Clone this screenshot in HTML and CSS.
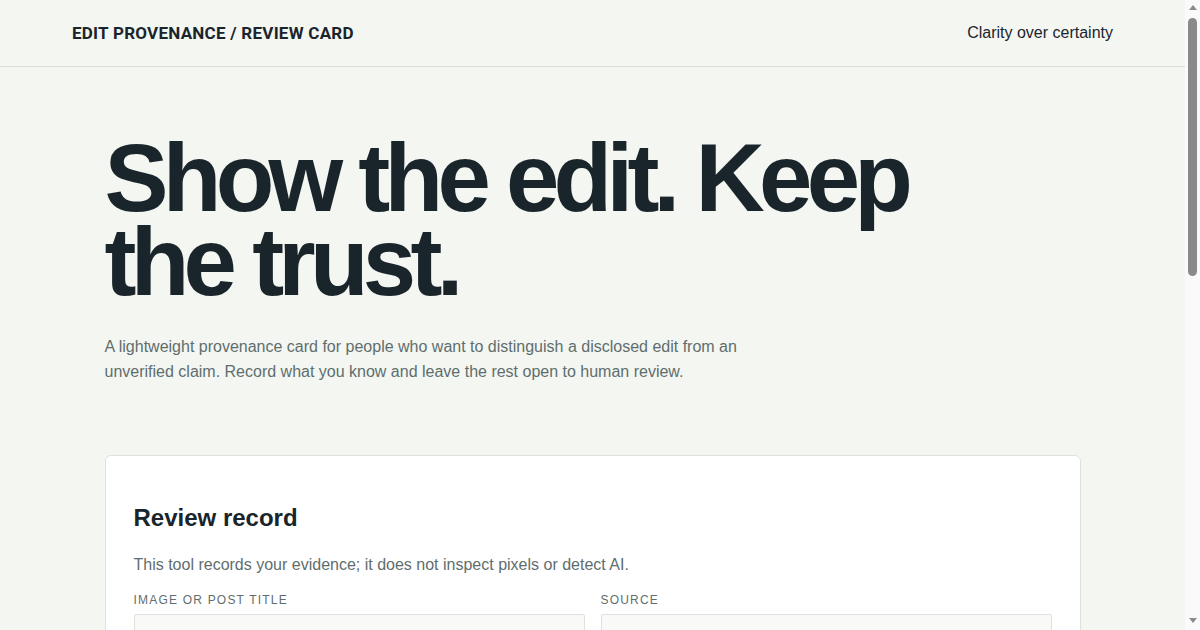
FILE: index.html
```html
<!DOCTYPE html>
<html lang="en">
<head>
<meta charset="utf-8">
<title>Edit Provenance / Review Card</title>
<link rel="stylesheet" href="styles.css">
</head>
<body>
<div class="page">
<header class="topbar">
  <div class="brand">EDIT PROVENANCE / REVIEW CARD</div>
  <div class="motto">Clarity over certainty</div>
</header>
<main class="wrap">
  <section class="hero">
    <h1 class="hero-title">Show the edit. Keep the trust.</h1>
    <p class="hero-lede">A lightweight provenance card for people who want to distinguish a disclosed edit from an unverified claim. Record what you know and leave the rest open to human review.</p>
  </section>
  <section class="card">
    <h2 class="card-title">Review record</h2>
    <p class="card-note">This tool records your evidence; it does not inspect pixels or detect AI.</p>
    <div class="fields">
      <label class="field">
        <span class="field-label">Image or post title</span>
        <input class="field-input" type="text">
      </label>
      <label class="field">
        <span class="field-label">Source</span>
        <input class="field-input" type="text">
      </label>
    </div>
  </section>
</main>
</div>
<div class="rail" aria-hidden="true">
  <span class="rail-up"></span>
  <span class="rail-thumb"></span>
  <span class="rail-down"></span>
</div>
</body>
</html>
```

FILE: styles.css
```css
html, body {
  margin: 0;
  padding: 0;
  height: 100%;
  overflow: hidden;
}
body {
  background: #f4f6f2;
  color: #1a252b;
  font-family: "Liberation Sans", Arial, sans-serif;
  display: flex;
}
.page {
  flex: 1;
  height: 100vh;
  overflow: hidden;
}
.rail {
  width: 15px;
  flex: none;
  height: 100vh;
  background: #fafafa;
  display: flex;
  flex-direction: column;
  align-items: center;
}
.rail-up {
  margin-top: 5px;
  width: 0;
  height: 0;
  border-left: 4.5px solid transparent;
  border-right: 4.5px solid transparent;
  border-bottom: 5px solid #8a8a8a;
}
.rail-thumb {
  margin-top: 8px;
  width: 9px;
  height: 258px;
  border-radius: 5px;
  background: #8a8a8a;
}
.rail-down {
  margin-top: auto;
  margin-bottom: 7px;
  width: 0;
  height: 0;
  border-left: 4.5px solid transparent;
  border-right: 4.5px solid transparent;
  border-top: 5px solid #8a8a8a;
}
.topbar {
  height: 67px;
  box-sizing: border-box;
  border-bottom: 1px solid #d8e2dc;
  display: flex;
  align-items: center;
  justify-content: space-between;
  padding: 0 72px;
}
.brand {
  font-family: Roboto, "Liberation Sans", sans-serif;
  font-weight: 700;
  font-size: 17px;
  line-height: 20px;
  letter-spacing: 0.015em;
  color: #1a252b;
  margin-top: -1px;
}
.motto {
  font-size: 16px;
  color: #1a252b;
}
.wrap {
  max-width: 976px;
  margin: 0 auto;
}
.hero {
  padding-top: 69px;
}
.hero-title {
  margin: 0;
  font-size: 96px;
  line-height: 0.88;
  font-weight: 700;
  letter-spacing: -0.06em;
  max-width: 860px;
  color: #1a252b;
}
.hero-lede {
  margin: 29px 0 0;
  max-width: 640px;
  font-size: 16px;
  line-height: 25px;
  color: #5f6e6d;
}
.card {
  margin-top: 71px;
  background: #ffffff;
  border: 1px solid #dce3de;
  border-radius: 6px;
  padding: 47px 28px 28px;
}
.card-title {
  margin: 0;
  font-size: 24px;
  line-height: 30px;
  font-weight: 700;
  color: #1a252b;
}
.card-note {
  margin: 20px 0 0;
  font-size: 16px;
  line-height: 24px;
  color: #5f6e6d;
}
.fields {
  margin-top: 16px;
  display: grid;
  grid-template-columns: 1fr 1fr;
  gap: 16px;
}
.field {
  display: flex;
  flex-direction: column;
  gap: 7px;
}
.field-label {
  font-size: 12px;
  letter-spacing: 0.1em;
  text-transform: uppercase;
  color: #5f6e6d;
  line-height: 14px;
}
.field-input {
  height: 44px;
  box-sizing: border-box;
  border: 1px solid #dce3de;
  border-radius: 2px;
  background: #f9faf7;
  font: inherit;
}
```
